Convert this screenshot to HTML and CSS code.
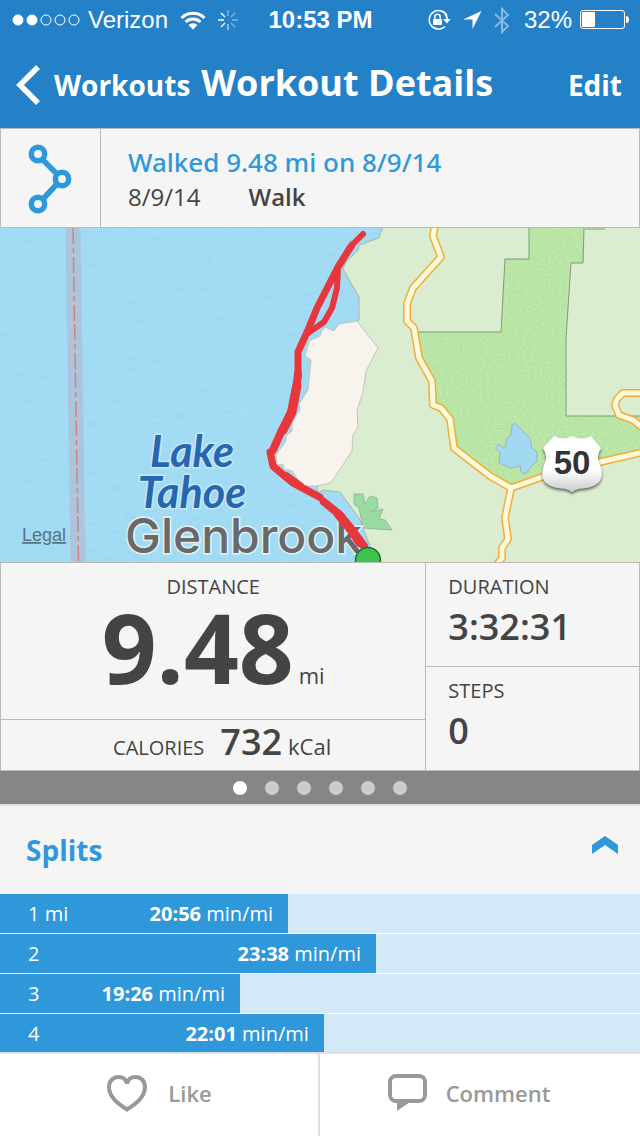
FILE: index.html
```html
<!DOCTYPE html>
<html lang="en">
<head>
<meta charset="utf-8">
<meta name="viewport" content="width=device-width, initial-scale=1">
<title>Workout Details</title>
<link rel="stylesheet" href="styles.css">
</head>
<body>
<div class="app">
  <header class="top">
    <div class="status">
      <div class="status-left">
        <svg class="signal" width="68" height="14" viewBox="0 0 68 14" aria-hidden="true">
          <g fill="#fff" stroke="#fff"><circle cx="6" cy="7" r="5"/><circle cx="20" cy="7" r="5"/></g>
          <g fill="none" stroke="#fff"><circle cx="34" cy="7" r="5"/><circle cx="48" cy="7" r="5"/><circle cx="62" cy="7" r="5"/></g>
        </svg>
        <span>Verizon</span>
        <svg class="wifi" width="26" height="20" viewBox="0 0 26 20" aria-hidden="true">
          <g fill="none" stroke="#fff" stroke-width="3"><path d="M1.500 8a16.500 16.500 0 0 1 23 0"/><path d="M5.500 12a11 11 0 0 1 15 0"/></g>
          <path d="M8.500 15a6.500 6.500 0 0 1 9 0L13 19.500z" fill="#fff"/>
        </svg>
        <svg class="spin" width="20" height="20" viewBox="0 0 20 20" stroke="#fff" stroke-width="1.500" aria-hidden="true">
          <path d="M10 0v6" opacity=".4"/><path d="M17 3L13 7" opacity=".4"/><path d="M20 10h-6" opacity=".4"/><path d="M17 17L13 13" opacity=".4"/><path d="M10 20v-6" opacity=".6"/><path d="M3 17L7 13" opacity=".9"/><path d="M0 10h6"/><path d="M3 3L7 7"/>
        </svg>
      </div>
      <span class="clock">10:53 PM</span>
      <div class="status-right">
        <svg width="24" height="22" viewBox="0 0 24 22" aria-hidden="true">
          <path d="M20 7A9.300 9.300 0 1 0 18 17.500" fill="none" stroke="#fff" stroke-width="1.500"/><path d="M16 10h7.500L20 14.500z" fill="#fff"/><path d="M20.300 11A10 10 0 0 0 18 5" fill="none" stroke="#fff" stroke-width="1.500"/>
          <rect x="6" y="10" width="9" height="6" rx="1" fill="#fff"/><path d="M7.800 10.500V8a2.700 2.700 0 0 1 5.400 0v2.500" fill="none" stroke="#fff" stroke-width="1.500"/>
        </svg>
        <svg class="loc" width="19" height="18" viewBox="0 0 19 18" aria-hidden="true"><path d="M18.500 0L0 8.500h9.500v9.500z" fill="#fff"/></svg>
        <svg class="bt" width="16" height="27" viewBox="0 0 16 27" aria-hidden="true"><path d="M1 7l13 12-6 6V2l6 6L1 20" fill="none" stroke="#fff" stroke-width="2" opacity=".45"/></svg>
        <span class="charge">32%</span>
        <svg class="battery" width="49" height="20" viewBox="0 0 49 20" aria-hidden="true">
          <rect x=".5" y=".5" width="44" height="18" rx="2.500" fill="none" stroke="#fff"/><rect x="2" y="2" width="13" height="15" rx="1" fill="#fff"/><path d="M46 6q3 0 3 3.500T46 13z" fill="#fff"/>
        </svg>
      </div>
    </div>
    <nav class="nav">
      <a class="back" href="#workouts">
        <svg width="24" height="40" viewBox="0 0 24 40" aria-hidden="true"><path d="M22 2L4 20l18 18" fill="none" stroke="#fff" stroke-width="5.500"/></svg>
        <span>Workouts</span>
      </a>
      <h1>Workout Details</h1>
      <button class="edit" type="button">Edit</button>
    </nav>
  </header>

  <main class="content">
    <section class="summary">
      <div class="sport">
        <svg width="44" height="70" viewBox="0 0 44 70" fill="none" stroke="#2f98da" aria-hidden="true">
          <path d="M15 16l14 14M29 40L15 55" stroke-width="5.500"/>
          <g stroke-width="5.500"><circle cx="10" cy="10" r="6.700"/><circle cx="34" cy="35" r="6.700"/><circle cx="10" cy="60" r="6.700"/></g>
        </svg>
      </div>
      <div class="summary-text">
        <h2>Walked 9.48 mi on 8/9/14</h2>
        <p><span>8/9/14</span><b>Walk</b></p>
      </div>
    </section>

    <section class="map" aria-label="Route map">
      <svg class="map-art" viewBox="0 0 640 334" preserveAspectRatio="xMidYMid slice">
        <defs>
          <filter id="grass" x="0" y="0" width="100%" height="100%" color-interpolation-filters="sRGB">
            <feTurbulence type="fractalNoise" baseFrequency=".35 .5" numOctaves="2" seed="4" result="n"/>
            <feColorMatrix in="n" values="0 0 0 0 .8  0 0 0 0 .93  0 0 0 0 .74  2 0 0 0 -.9"/>
            <feComposite operator="in" in2="SourceGraphic" result="speck"/>
            <feMerge><feMergeNode in="SourceGraphic"/><feMergeNode in="speck"/></feMerge>
          </filter>
          <filter id="ripple" x="0" y="0" width="100%" height="100%" color-interpolation-filters="sRGB">
            <feTurbulence type="fractalNoise" baseFrequency=".08 .4" numOctaves="2" seed="9" result="n"/>
            <feColorMatrix in="n" values="0 0 0 0 .5  0 0 0 0 .78  0 0 0 0 .9  .3 0 0 0 -.12"/>
            <feComposite operator="in" in2="SourceGraphic" result="wave"/>
            <feMerge><feMergeNode in="SourceGraphic"/><feMergeNode in="wave"/></feMerge>
          </filter>
          <filter id="drop" x="-20%" y="-20%" width="140%" height="150%"><feDropShadow dx="0" dy="2" stdDeviation="1.500" flood-opacity=".6"/></filter>
          <linearGradient id="shield" x2="0" y2="1"><stop offset=".6" stop-color="#fff"/><stop offset="1" stop-color="#ccc"/></linearGradient>
          <path id="roads" d="M435-3L433 8l8 21-28 31-6 16v17l7 7 5 30 13 23 1 24 8 3 9 11 4 29 36 28 21 12 31-11 58-15 40-9M511 260l-6 30 3 21-6 9v10l-6 8M643 165h-20l-6 6-2 6 4 10 14 5 10 8"/>
        </defs>
        <rect width="640" height="334" fill="#a3dcf4" filter="url(#ripple)"/>
        <path d="M65.500 0h15l5 334h-15z" fill="#acc5dd"/>
        <path d="M73 0l5.500 334" stroke="#d48576" stroke-width="1.500" stroke-dasharray="16 4 5 4 16 3"/>
        <path d="M383-2L379 10l-20 7-1 5-12 12-3 7 16 28v23l-2 1-40 165 1 7 5-3 17 2 19 26 11 28v20h275V-2z" fill="#daedd0" stroke="#a4b8a5"/>
        <path d="M529-2v33h-24l-4 73h-84l2 26 13 23 1 24 8 3 9 11 4 29 36 28 21 12 31-11 58-15 42-9V188h-76v-78l5-75h12l1-37z" fill="#b7e4a2" filter="url(#grass)"/>
        <path d="M529 0v31h-24l-4 73h-84M584 0l-1 35h-12l-5 75v78h74M585 1h20" fill="none" stroke="#7f9c72"/>
        <path d="M357 93l21 27-12 23-3 21-6 19 1 16-5 8-1 16-21 32-14 3h-15l-10-15-8-2-1-5-6 1-1-10 10-14v-5l6-5v-9l8-12-1-6 9-14 3-30-6-4 4-15 11-5 1-4 4-5 9 4 5-7z" fill="#f8f4ed" stroke="#c3c4bd"/>
        <path d="M354 266h9l2 10 5-8 7 2 1 10-7 4 12-3-4 10 6 1 7 10-29-2-4-20-5-4z" fill="#98dca2" stroke="#99b69b"/>
        <path d="M515 195l15 15 2 10 5 4v9l-12 13-4-2-1-6-9 2-12-5 1-11-5-4 4-4 3 3h3l2-9 4-3 1-10z" fill="#a1d9f3" stroke="#9eb3b5"/>
        <g fill="none" stroke-linejoin="round"><use href="#roads" stroke="#efae38" stroke-width="8"/><use href="#roads" stroke="#fff9dc" stroke-width="5"/></g>
        <path d="M554 208q9 5 18 0q10 5 19 0l10 12q-6 9-1 17q7 20-15 23q-8 0-13 4q-5-4-13-4q-22-3-15-23q5-8-1-17z" fill="url(#shield)" filter="url(#drop)"/>
        <text class="road-no" x="572" y="246">50</text>
        <text class="legal" x="22" y="313">Legal</text>
        <text class="lake" x="192" y="239">Lake</text>
        <text class="lake" x="192" y="280">Tahoe</text>
        <text class="town" x="125" y="325">Glenbrook</text>
        <g fill="none" stroke="#e8363d" stroke-linecap="round" stroke-linejoin="round">
          <path stroke-width="6" d="M363 6l-13 13-12 20-21 41-9 22-10 22v26l-6 34-10 20-11 22 2 13 19 16 28 15 20 17 25 34M338 39l-1 21-5 20-8 14-16 11"/>
          <path stroke-width="7" d="M352 17l-14 22-21 41-9 22-10 22v26M270 224l3 14 19 16 28 15"/>
          <path stroke-width="8" d="M298 146l-1 8-6 30-10 20-8 18M286 248l14 10M324 274l16 13 13 16 11 15"/>
          <path stroke-width="9" d="M297 158l-5 26-9 18M338 286l14 17 8 12"/>
        </g>
        <circle cx="368" cy="332" r="12.500" fill="#3ac44b" stroke="#27693a" stroke-width="1.500"/>
      </svg>
    </section>

    <section class="stats">
      <div class="stats-main">
        <div class="distance">
          <h3>DISTANCE</h3>
          <p><strong>9.48</strong><span>mi</span></p>
        </div>
        <div class="calories">
          <h3>CALORIES</h3>
          <p><strong>732</strong><span>kCal</span></p>
        </div>
      </div>
      <div class="stats-side">
        <div class="metric duration"><h3>DURATION</h3><p>3:32:31</p></div>
        <div class="metric"><h3>STEPS</h3><p>0</p></div>
      </div>
    </section>

    <div class="pager">
      <button class="dot on" type="button" aria-label="Page 1"></button>
      <button class="dot" type="button" aria-label="Page 2"></button>
      <button class="dot" type="button" aria-label="Page 3"></button>
      <button class="dot" type="button" aria-label="Page 4"></button>
      <button class="dot" type="button" aria-label="Page 5"></button>
      <button class="dot" type="button" aria-label="Page 6"></button>
    </div>

    <section class="splits">
      <div class="splits-head">
        <h2>Splits</h2>
        <button class="toggle" type="button" aria-label="Collapse splits">
          <svg width="26" height="18" viewBox="0 0 26 18" aria-hidden="true"><path d="M0 9L13 0l13 9v9L13 9 0 18z" fill="#2f98da"/></svg>
        </button>
      </div>
      <ol class="split-list">
        <li><div class="bar" style="width:45%"><span>1 mi</span><span class="pace"><b>20:56</b> min/mi</span></div></li>
        <li><div class="bar" style="width:58.75%"><span>2</span><span class="pace"><b>23:38</b> min/mi</span></div></li>
        <li><div class="bar" style="width:37.5%"><span>3</span><span class="pace"><b>19:26</b> min/mi</span></div></li>
        <li><div class="bar" style="width:50.6%"><span>4</span><span class="pace"><b>22:01</b> min/mi</span></div></li>
      </ol>
    </section>
  </main>

  <footer class="actions">
    <button class="like" type="button">
      <svg width="42" height="38" viewBox="0 0 42 38" aria-hidden="true"><path d="M21 35.500C14 31 3 24 3 13C3 7 7 3 12.500 3C17 3 20 5.500 21 9.500C22 5.500 25 3 29.500 3C35 3 39 7 39 13C39 24 28 31 21 35.500z" fill="none" stroke="#9b9796" stroke-width="4"/></svg>
      <span>Like</span>
    </button>
    <button class="comment" type="button">
      <svg width="40" height="38" viewBox="0 0 40 38" aria-hidden="true"><rect x="2" y="2" width="35" height="25" rx="6" fill="none" stroke="#999" stroke-width="4"/><path d="M9 28h13L9 37z" fill="#999"/></svg>
      <span>Comment</span>
    </button>
  </footer>
</div>
</body>
</html>
```
FILE: styles.css
```css
* { box-sizing: border-box; }

body, h1, h2, h3, p, ol { margin: 0; padding: 0; }

body {
  font-family: "Open Sans", "Noto Sans", sans-serif;
  color: #444;
  background: #fff;
}

button {
  font: inherit;
  color: inherit;
  background: none;
  border: 0;
  padding: 0;
}

svg { display: block; flex: none; }

.app {
  display: flex;
  flex-direction: column;
  height: 100vh;
  overflow: hidden;
}

/* Header */
.top { flex: none; background: #2581c7; color: #fff; }

.status {
  display: grid;
  grid-template-columns: 1fr auto 1fr;
  align-items: center;
  height: 40px;
  padding: 0 11px 0 12px;
  font: 24px/40px "Liberation Sans", Arial, sans-serif;
}
.status-left, .status-right { display: flex; align-items: center; }
.status-left { gap: 8px; }
.status-right { justify-content: flex-end; }
.wifi { margin-left: 4px; }
.spin { margin-left: 4px; }
.clock { font-weight: 700; font-size: 24px; }
.loc { margin-left: 12px; }
.bt { margin: 0 14px 0 12px; }
.battery { margin-left: 8px; }

.nav {
  display: flex;
  align-items: center;
  height: 88px;
  padding: 2px 18px 0 16px;
}
.back {
  display: flex;
  align-items: center;
  gap: 14px;
  color: #fff;
  text-decoration: none;
  font-size: 28px;
  line-height: 40px;
  font-weight: 700;
}
.nav h1 { margin-left: 11px; padding-bottom: 4px; font-size: 36px; line-height: 40px; font-weight: 700; }
.edit { margin-left: auto; font-size: 28px; line-height: 40px; font-weight: 700; }

.content { flex: 1; min-height: 0; overflow: hidden; }

/* Summary */
.summary {
  display: flex;
  height: 100px;
  background: #f5f5f5;
  border: 1px solid #bbb;
}
.sport {
  display: flex;
  align-items: center;
  justify-content: center;
  width: 100px;
  padding: 2px 2px 0 0;
  border-right: 1px solid #bbb;
}
.summary-text { padding: 15px 27px; }
.summary-text h2 { font-family: "Noto Sans", sans-serif; font-size: 26px; line-height: 36px; font-weight: 500; color: #2f98da; }
.summary-text p { display: flex; gap: 48px; font-size: 24px; line-height: 34px; }
.summary-text b { font-weight: 600; }

/* Map */
.map { height: 334px; }
.map-art { width: 100%; height: 100%; }
.road-no { font: 700 33px "Liberation Sans", Arial, sans-serif; text-anchor: middle; fill: #333; }
.legal { font: 18px "Liberation Sans", Arial, sans-serif; fill: #567585; text-decoration: underline; }
.lake {
  font: italic 700 43px Lato, sans-serif;
  text-anchor: middle;
  fill: #2767b0;
  stroke: #c9e9f7;
  stroke-width: 3px;
  paint-order: stroke;
}
.town {
  font: 500 48px Inter, sans-serif;
  fill: #696969;
  stroke: #e4f2f4;
  stroke-width: 3px;
  paint-order: stroke;
}

/* Stats */
.stats {
  display: grid;
  grid-template-columns: 2fr 1fr;
  height: 209px;
  background: #f5f5f5;
  border: 1px solid #bbb;
}
h3 { font-size: 20px; line-height: 28px; font-weight: 400; }
.stats-main { display: flex; flex-direction: column; border-right: 1px solid #bbb; }
.stats-main p { display: flex; align-items: baseline; justify-content: center; }
.stats-main span { font-size: 22px; line-height: 24px; }
.distance { flex: 1; padding-top: 10px; text-align: center; border-bottom: 1px solid #bbb; }
.distance p { gap: 5px; line-height: 92px; }
.distance strong { font-size: 96px; font-weight: 700; }
.calories {
  display: flex;
  align-items: baseline;
  justify-content: center;
  gap: 16px;
  height: 50px;
  padding-left: 18px;
}
.calories p { gap: 6px; line-height: 44px; }
.calories strong { font-size: 36px; font-weight: 600; }
.stats-side { display: grid; grid-template-rows: 1fr 1fr; }
.metric { padding: 10px 22px 0; }
.metric p { font-size: 36px; line-height: 52px; font-weight: 600; }
.duration { border-bottom: 1px solid #bbb; }

/* Pager */
.pager {
  display: flex;
  align-items: center;
  justify-content: center;
  gap: 18px;
  height: 33px;
  background: #868686;
}
.dot { width: 14px; height: 14px; border-radius: 50%; background: #ccc; }
.dot.on { background: #fff; }

/* Splits */
.splits-head {
  display: flex;
  align-items: center;
  justify-content: space-between;
  height: 90px;
  padding: 0 22px 0 26px;
  background: #f5f5f5;
  border-top: 2px solid #e0e0e0;
}
.splits-head h2 { font-size: 28px; line-height: 40px; font-weight: 700; color: #2f98da; }
.toggle { padding-bottom: 10px; }
.split-list { list-style: none; }
.split-list li { height: 40px; background: #d4e9f7; border-bottom: 1px solid #fff; }
.bar {
  display: flex;
  align-items: center;
  justify-content: space-between;
  height: 100%;
  padding: 0 15px 0 28px;
  background: #2f98da;
  color: #fff;
  font-size: 20px;
  line-height: 28px;
  white-space: nowrap;
}

/* Bottom actions */
.actions {
  flex: none;
  display: grid;
  grid-template-columns: 1fr 1fr;
  height: 84px;
  background: #fff;
  border-top: 2px solid #e0e0e0;
  color: #999;
  font-size: 22px;
  line-height: 32px;
  font-weight: 600;
}
.actions button { display: flex; align-items: center; justify-content: center; padding-bottom: 4px; }
.like { gap: 20px; border-right: 2px solid #e0e0e0; }
.actions .comment { gap: 18px; padding-right: 22px; }
```
